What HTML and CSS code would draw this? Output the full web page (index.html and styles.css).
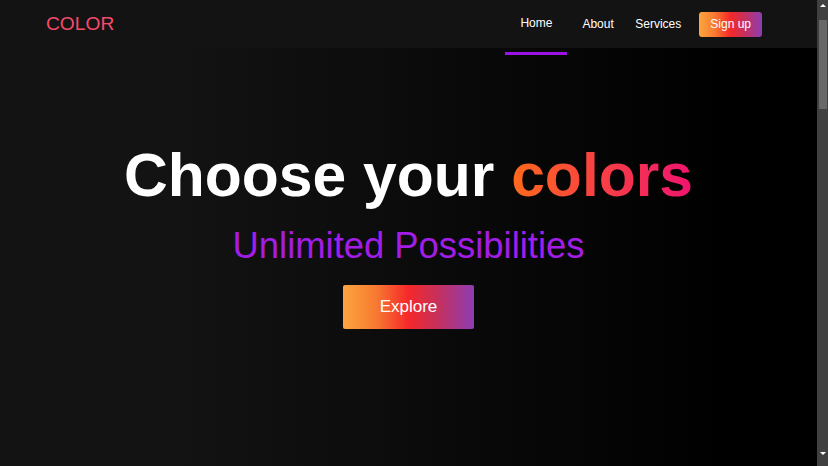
FILE: index.html
```html
<!DOCTYPE html>
<html lang="en">
<head>
<meta charset="utf-8">
<title>COLOR</title>
<link rel="stylesheet" href="styles.css">
</head>
<body>
<header class="nav">
  <a class="logo" href="#">COLOR</a>
  <ul class="nav-links">
    <li class="nav-item"><a class="nav-link active" href="#">Home</a></li>
    <li class="nav-item item-about"><a class="nav-link" href="#about">About</a></li>
    <li class="nav-item item-services"><a class="nav-link" href="#services">Services</a></li>
    <li class="nav-item item-signup"><a class="btn btn-small" href="#">Sign up</a></li>
  </ul>
</header>
<main>
  <section class="hero">
    <h1 class="hero-title">Choose your <span class="accent">colors</span></h1>
    <p class="hero-sub">Unlimited Possibilities</p>
    <a class="btn btn-large" href="#">Explore</a>
  </section>
  <section class="section" id="about"></section>
  <section class="section" id="services"></section>
</main>
<div class="scrollbar" aria-hidden="true">
  <span class="sb-arrow sb-up"></span>
  <span class="sb-thumb"></span>
  <span class="sb-arrow sb-down"></span>
</div>
</body>
</html>
```

FILE: styles.css
```css
html {
  background: #000;
}

body {
  margin: 0;
  padding-right: 11px;
  font-family: "Liberation Sans", Arial, sans-serif;
  background: linear-gradient(90deg, #131313 20%, #0b0b0b 50%, #000 88%);
  color: #fff;
}

a {
  text-decoration: none;
}

/* scrollbar drawn over the right edge */
.scrollbar {
  position: fixed;
  top: 0;
  right: 0;
  bottom: 0;
  width: 11px;
  display: flex;
  flex-direction: column;
  align-items: center;
  background: #404040;
}

.sb-arrow {
  width: 0;
  height: 0;
  border-left: 3px solid transparent;
  border-right: 3px solid transparent;
}

.sb-up {
  margin-top: 4px;
  border-bottom: 3px solid #fff;
}

.sb-down {
  margin-top: auto;
  margin-bottom: 11px;
  border-top: 3px solid #fff;
}

.sb-thumb {
  width: 8px;
  height: 89px;
  margin: 13px 0 0 1px;
  background: #686868;
}

.nav {
  display: flex;
  align-items: center;
  justify-content: space-between;
  height: 48px;
  padding: 0 55px 0 46px;
  background: #131313;
}

.logo {
  font-size: 19.2px;
  color: #f54b6b;
}

.nav-links {
  display: flex;
  align-items: center;
  list-style: none;
  margin: 0;
  padding: 0;
}

.nav-link {
  position: relative;
  display: block;
  font-size: 12px;
  color: #fff;
}

.nav-link.active {
  padding: 0 15px;
  top: -1px;
}

.nav-link.active::after {
  content: "";
  position: absolute;
  left: 0;
  right: 0;
  bottom: -25px;
  height: 3px;
  background: #9a12e4;
}

.item-about {
  margin-left: 15px;
}

.item-services {
  margin-left: 21.5px;
}

.item-signup {
  margin-left: 18px;
}

.btn {
  display: block;
  color: #fff;
  background: linear-gradient(90deg, #fca63f 0%, #f77a30 25%, #f5282a 50%, #c7305c 72%, #8d3db3 100%);
}

.btn-small {
  font-size: 12px;
  line-height: 15px;
  padding: 5px 11px;
  border-radius: 3px;
}

.btn-large {
  font-size: 17px;
  line-height: 20px;
  padding: 12px 37px;
  border-radius: 2px;
  margin-top: 18px;
}

.hero {
  display: flex;
  flex-direction: column;
  align-items: center;
  box-sizing: border-box;
  height: calc(100vh - 48px);
  padding-top: 92px;
}

.hero-title {
  margin: 0;
  font-size: 60.6px;
  font-weight: 700;
  color: #fff;
}

.accent {
  background: linear-gradient(90deg, #ff6a1c, #f0146f);
  -webkit-background-clip: text;
  background-clip: text;
  color: transparent;
}

.hero-sub {
  margin: 15px 0 0;
  font-size: 36.4px;
  color: #a31de8;
}

.section {
  min-height: 897px;
}
```
